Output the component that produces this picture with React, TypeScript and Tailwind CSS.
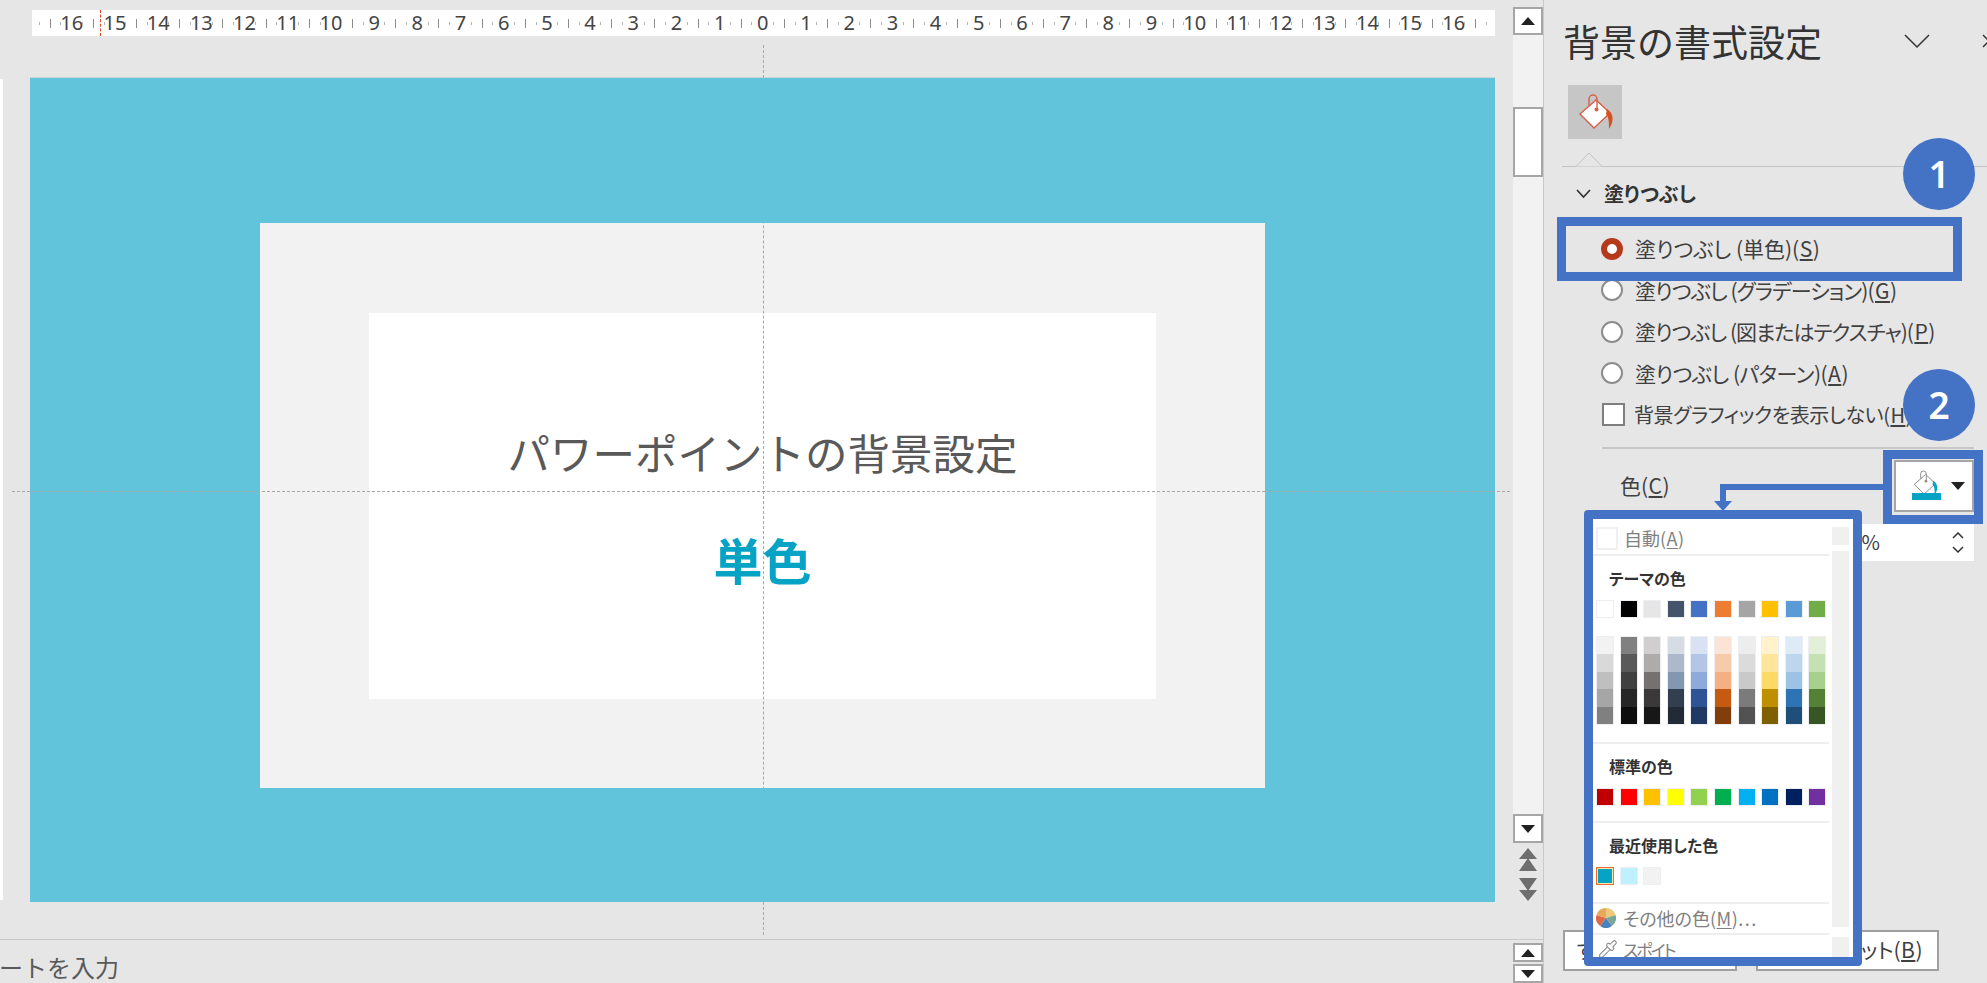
import { Pipette } from "lucide-react";

// ============================================================
// Data
// ============================================================

const rulerNumbers = [16, 15, 14, 13, 12, 11, 10, 9, 8, 7, 6, 5, 4, 3, 2, 1, 0, 1, 2, 3, 4, 5, 6, 7, 8, 9, 10, 11, 12, 13, 14, 15, 16];

const themeColors = [
  "bg-[#ffffff]", "bg-[#000000]", "bg-[#e7e6e6]", "bg-[#44546a]", "bg-[#4472c4]",
  "bg-[#ed7d31]", "bg-[#a5a5a5]", "bg-[#ffc000]", "bg-[#5b9bd5]", "bg-[#70ad47]",
];

const shadeColumns = [
  ["bg-[#f2f2f2]", "bg-[#d9d9d9]", "bg-[#bfbfbf]", "bg-[#a6a6a6]", "bg-[#808080]"],
  ["bg-[#808080]", "bg-[#595959]", "bg-[#404040]", "bg-[#262626]", "bg-[#0d0d0d]"],
  ["bg-[#d0cece]", "bg-[#aeabab]", "bg-[#757171]", "bg-[#3a3838]", "bg-[#181717]"],
  ["bg-[#d6dce4]", "bg-[#adb9ca]", "bg-[#8497b0]", "bg-[#333f4f]", "bg-[#222a35]"],
  ["bg-[#d9e2f3]", "bg-[#b4c6e7]", "bg-[#8eaadb]", "bg-[#2f5496]", "bg-[#1f3864]"],
  ["bg-[#fbe4d5]", "bg-[#f7caac]", "bg-[#f4b083]", "bg-[#c55a11]", "bg-[#833c0b]"],
  ["bg-[#ededed]", "bg-[#dbdbdb]", "bg-[#c9c9c9]", "bg-[#7b7b7b]", "bg-[#525252]"],
  ["bg-[#fff2cc]", "bg-[#ffe599]", "bg-[#ffd966]", "bg-[#bf8f00]", "bg-[#7f6000]"],
  ["bg-[#deeaf6]", "bg-[#bdd6ee]", "bg-[#9cc2e5]", "bg-[#2e74b5]", "bg-[#1f4e79]"],
  ["bg-[#e2efd9]", "bg-[#c5e0b3]", "bg-[#a8d08d]", "bg-[#538135]", "bg-[#375623]"],
];

const standardColors = [
  "bg-[#c00000]", "bg-[#ff0000]", "bg-[#ffc000]", "bg-[#ffff00]", "bg-[#92d050]",
  "bg-[#00b050]", "bg-[#00b0f0]", "bg-[#0070c0]", "bg-[#002060]", "bg-[#7030a0]",
];

const fillOptions = [
  { label: "塗りつぶし (単色)", key: "S", checked: true, tracking: "tracking-normal" },
  { label: "塗りつぶし (グラデーション)", key: "G", checked: false, tracking: "tracking-[-0.9px]" },
  { label: "塗りつぶし (図またはテクスチャ)", key: "P", checked: false, tracking: "tracking-[-1px]" },
  { label: "塗りつぶし (パターン)", key: "A", checked: false, tracking: "tracking-[-0.5px]" },
];

// ============================================================
// Small parts
// ============================================================

function Triangle({ up, className }: { up?: boolean; className?: string }) {
  return (
    <svg width="14" height="8" viewBox="0 0 14 8" className={className}>
      <path d={up ? "M7 0 14 8H0Z" : "M0 0H14L7 8Z"} fill="currentColor" />
    </svg>
  );
}

function ScrollButton({ up, className }: { up?: boolean; className: string }) {
  return (
    <div className={`flex w-[30px] items-center justify-center border-2 border-[#a6a6a6] bg-white text-[#222] ${className}`}>
      <Triangle up={up} />
    </div>
  );
}

function Hotkey({ k }: { k: string }) {
  return (
    <span className="tracking-[0.5px]">
      (<span className="underline underline-offset-2">{k}</span>)
    </span>
  );
}

function Swatch({ color }: { color: string }) {
  return <div className={`h-[18px] w-[18px] border-[1.5px] border-[#eceef1] ${color}`} />;
}

function SwatchRow({ colors }: { colors: string[] }) {
  return (
    <div className="flex gap-[5.6px] pl-[3px]">
      {colors.map((c, i) => (
        <Swatch key={i} color={c} />
      ))}
    </div>
  );
}

function MenuDivider() {
  return <div className="h-[2px] w-[236px] bg-[#eeeeee]" />;
}

function MenuHeading({ children }: { children: string }) {
  return (
    <div className="flex h-[44px] items-center pl-[16px] text-[16px] font-bold text-[#333] [font-feature-settings:'palt']">
      {children}
    </div>
  );
}

function Bucket({ stroke, drip }: { stroke: string; drip: string }) {
  return (
    <svg width="54" height="54" viewBox="0 0 54 54" fill="none">
      <path d="M12 29 28 15 42 28 26 43Z" fill="#fff" stroke={stroke} strokeWidth="1.4" />
      <path d="M21 21V14a4 4 0 0 1 8 0V24" stroke={stroke} strokeWidth="1.4" />
      <circle cx="28.5" cy="24.5" r="2" fill={stroke} />
      <path d="M39 24C45 28 47 35 41 44C41 37 41 33 38 29Z" fill={drip} />
    </svg>
  );
}

// ============================================================
// Ruler
// ============================================================

function Ruler() {
  const small = <span className="h-[3px] w-px bg-[#b5b5b5]" />;
  const tall = <span className="h-[9px] w-px bg-[#8c8c8c]" />;
  const cell = "flex h-full w-[10.8px] flex-none items-center justify-center";
  return (
    <div className="relative ml-[32px] mt-[10px] flex h-[26px] w-[1463px] bg-white pl-[2px] font-['Noto_Sans'] text-[20px] text-[#444]">
      <span className={cell}>{small}</span>
      <span className={cell}>{tall}</span>
      <span className={cell}>{small}</span>
      {rulerNumbers.map((n, i) => (
        <div key={i} className="flex">
          <span className={cell}>{n}</span>
          <span className={cell}>{small}</span>
          <span className={cell}>{tall}</span>
          <span className={cell}>{small}</span>
        </div>
      ))}
      <div className="absolute left-[68px] top-0 h-full border-l border-dashed border-[#e0452a]" />
    </div>
  );
}

// ============================================================
// Colour menu
// ============================================================

function ColorMenu() {
  return (
    <div className="absolute left-[1584px] top-[510px] flex h-[456px] w-[278px] overflow-hidden rounded-[4px] border-[9px] border-[#4472c4] bg-white">
      <div className="w-[239px] flex-none">
        <div className="flex h-[35px] items-start gap-[6px] pl-[3px] pt-[8px] text-[18px] text-[#808080]">
          <div className="h-[23px] w-[22px] border-2 border-[#f0f0f0]" />
          <span className="leading-[23px]">
            自動<Hotkey k="A" />
          </span>
        </div>
        <MenuDivider />
        <MenuHeading>テーマの色</MenuHeading>
        <SwatchRow colors={themeColors} />
        <div className="mt-[18px] flex gap-[5.6px] pl-[3px]">
          {shadeColumns.map((col, i) => (
            <div key={i} className="w-[18px] border-[1.5px] border-[#eceef1]">
              {col.map((c) => (
                <div key={c} className={`h-[17.4px] ${c}`} />
              ))}
            </div>
          ))}
        </div>
        <div className="mt-[17px]">
          <MenuDivider />
        </div>
        <MenuHeading>標準の色</MenuHeading>
        <SwatchRow colors={standardColors} />
        <div className="mt-[15px]">
          <MenuDivider />
        </div>
        <MenuHeading>最近使用した色</MenuHeading>
        <div className="flex gap-[5.6px] pl-[3px]">
          <div className="h-[18px] w-[18px] border-[1.5px] border-[#ed6c2c] bg-[#fde9b0] p-px">
            <div className="h-full w-full bg-[#06a3c4]" />
          </div>
          <Swatch color="bg-[#bff0ff]" />
          <Swatch color="bg-[#f2f2f2]" />
        </div>
        <div className="mt-[17px]">
          <MenuDivider />
        </div>
        <div className="flex h-[29px] items-center gap-[7px] pl-[3px] text-[18px] text-[#808080] [font-feature-settings:'palt']">
          <svg width="20" height="20" viewBox="0 0 20 20" className="flex-none">
            <path d="M10 10V0A10 10 0 0 1 19.51 6.91Z" fill="#f0c87c" />
            <path d="M10 10 19.51 6.91A10 10 0 0 1 15.88 18.09Z" fill="#7ba896" />
            <path d="M10 10 15.88 18.09A10 10 0 0 1 4.12 18.09Z" fill="#4a82bc" />
            <path d="M10 10 4.12 18.09A10 10 0 0 1 .49 6.91Z" fill="#dc6a45" />
            <path d="M10 10 .49 6.91A10 10 0 0 1 10 0Z" fill="#e8a85c" />
          </svg>
          <span>
            その他の色<Hotkey k="M" />
            <span className="tracking-[1.5px]">...</span>
          </span>
        </div>
        <MenuDivider />
        <div className="flex h-[30px] items-center gap-[5px] pl-[4px] text-[17px] tracking-[-2px] text-[#808080] [font-feature-settings:'palt']">
          <Pipette size={21} strokeWidth={1.2} className="flex-none text-[#8a8a8a]" />
          <span>スポイト</span>
        </div>
      </div>
      <div className="flex w-[17px] flex-none flex-col pt-[8px]">
        <div className="h-[18px] bg-[#f0f0f0]" />
        <div className="mt-[6px] h-[379px] bg-[#f0f0f0]" />
        <div className="mt-[10px] h-[20px] bg-[#f0f0f0]" />
      </div>
    </div>
  );
}

// ============================================================
// Format panel
// ============================================================

function FormatPanel() {
  return (
    <div className="h-full w-[443px] flex-none overflow-hidden text-[#404040]">
      <div className="mt-[18px] flex h-[46px] items-center pl-[19px]">
        <span className="flex-none whitespace-nowrap text-[37px] leading-none text-[#333]">背景の書式設定</span>
        <svg width="26" height="15" viewBox="0 0 26 15" fill="none" className="ml-[82px] flex-none">
          <path d="M1 1 13 13 25 1" stroke="#333" strokeWidth="1.5" />
        </svg>
        <svg width="14" height="14" viewBox="0 0 14 14" fill="none" className="ml-[52px] flex-none">
          <path d="M1 1 13 13M13 1 1 13" stroke="#333" strokeWidth="1.5" />
        </svg>
      </div>

      <div className="ml-[24px] mt-[21px] h-[54px] w-[54px] bg-[#c6c6c6]">
        <Bucket stroke="#d8604a" drip="#d8501f" />
      </div>

      <div className="relative ml-[18px] mt-[27px] h-px bg-[#c4c4c4]">
        <svg width="26" height="15" viewBox="0 0 26 15" className="absolute -top-[14px] left-[14px]">
          <path d="M0 14.5 13 1 26 14.5" fill="#e6e6e6" stroke="#c4c4c4" />
        </svg>
      </div>

      <div className="mt-[13px] flex h-[28px] items-center gap-[13px] pl-[32px] text-[20px] font-bold text-[#333] [font-feature-settings:'palt']">
        <svg width="15" height="10" viewBox="0 0 15 10" fill="none">
          <path d="M1 1 7.5 8 14 1" stroke="#333" strokeWidth="1.7" />
        </svg>
        <span>塗りつぶし</span>
      </div>

      <div className="mt-[20px] text-[21px] [font-feature-settings:'palt']">
        {fillOptions.map((o) => (
          <div key={o.key} className="flex h-[41.5px] items-center gap-[12px] pl-[57px]">
            {o.checked ? (
              <span className="h-[22px] w-[22px] flex-none rounded-full border-[6px] border-[#b5391a] bg-white" />
            ) : (
              <span className="h-[22px] w-[22px] flex-none rounded-full border-2 border-[#8c8c8c] bg-white" />
            )}
            <span className={`whitespace-nowrap ${o.tracking}`}>
              {o.label}
              <Hotkey k={o.key} />
            </span>
          </div>
        ))}
        <div className="flex h-[41.5px] items-center gap-[9px] pl-[58px]">
          <span className="h-[23px] w-[23px] flex-none border-2 border-[#7f7f7f] bg-white" />
          <span className="whitespace-nowrap text-[20px] tracking-[-0.4px]">
            背景グラフィックを表示しない
            <Hotkey k="H" />
          </span>
        </div>
      </div>

      <div className="ml-[58px] mr-[13px] mt-[11px] h-[2px] bg-[#c8c8c8]" />

      <div className="mt-[11px] flex h-[52px] items-center justify-between pl-[76px] pr-[13px] text-[21px]">
        <span>
          色<Hotkey k="C" />
        </span>
        <div className="flex h-[52px] w-[80px] items-center gap-[8px] border-2 border-[#a6a6a6] bg-white pl-[7px]">
          <div className="relative h-[36px] w-[40px] flex-none overflow-hidden">
            <div className="absolute left-[3px] -top-[4px] origin-top-left scale-[0.7]">
              <Bucket stroke="#8c8c8c" drip="#06a3c4" />
            </div>
            <div className="absolute bottom-[4px] left-[9px] h-[7px] w-[29px] bg-[#06a3c4]" />
          </div>
          <Triangle className="flex-none text-[#222]" />
        </div>
      </div>

      <div className="ml-auto mr-[13px] mt-[12px] flex h-[37px] w-[200px] items-center justify-end bg-white pr-[10px] text-[20px]">
        <span className="mr-[72px]">0%</span>
        <div className="flex flex-col gap-[7px]">
          <svg width="12" height="7" viewBox="0 0 12 7" fill="none">
            <path d="M1 6 6 1 11 6" stroke="#333" strokeWidth="1.5" />
          </svg>
          <svg width="12" height="7" viewBox="0 0 12 7" fill="none">
            <path d="M1 1 6 6 11 1" stroke="#333" strokeWidth="1.5" />
          </svg>
        </div>
      </div>

      <div className="mt-[369px] flex gap-[19px] pl-[19px] text-[21px] [font-feature-settings:'palt']">
        <div className="flex h-[41px] w-[174px] items-center justify-center whitespace-nowrap border-2 border-[#a0a0a0] bg-white">
          すべてに適用<Hotkey k="L" />
        </div>
        <div className="flex h-[41px] w-[183px] items-center justify-end whitespace-nowrap border-2 border-[#a0a0a0] bg-white pr-[14px]">
          背景のリセット
          <Hotkey k="B" />
        </div>
      </div>
    </div>
  );
}

// ============================================================
// App
// ============================================================

export default function App() {
  return (
    <div className="relative flex h-[983px] w-[1987px] overflow-hidden bg-[#e6e6e6] font-['Noto_Sans_CJK_JP','Noto_Sans',sans-serif]">
      {/* スライド + ノート */}
      <div className="flex h-full w-[1544px] flex-none flex-col border-r border-[#c8c8c8]">
        <div className="flex h-[939px] flex-none">
          <div className="w-[1513px] flex-none">
            <Ruler />
            <div className="mt-[41px] flex h-[825px]">
              <div className="my-[2px] w-[3px] bg-white" />
              <div className="ml-[27px] flex w-[1465px] items-start justify-center border-t border-[#c9d6da] bg-[#62c4da]">
                <div className="mt-[145px] flex h-[565px] w-[1005px] items-start justify-center bg-[#f2f2f2]">
                  <div className="mt-[90px] flex h-[386px] w-[787px] flex-col items-center bg-white">
                    <div className="mt-[110px] text-[42.5px] leading-[58px] text-[#595959]">
                      パワーポイントの背景設定
                    </div>
                    <div className="mt-[46px] text-[49px] font-semibold leading-[64px] text-[#06a3c4]">
                      単色
                    </div>
                  </div>
                </div>
              </div>
            </div>
          </div>
          <div className="flex w-[30px] flex-none flex-col pt-[7px]">
            <ScrollButton up className="h-[28px]" />
            <div className="flex h-[779px] flex-none flex-col bg-[#f2f2f2] pt-[72px]">
              <div className="h-[70px] w-[30px] border-2 border-[#a6a6a6] bg-white" />
            </div>
            <ScrollButton className="h-[29px]" />
            <div className="mt-[5px] flex flex-col items-center gap-[7px] text-[#6e6e6e]">
              <svg width="18" height="23" viewBox="0 0 18 23">
                <path d="M9 0 18 11H0ZM9 10 18 23H0Z" fill="currentColor" />
              </svg>
              <svg width="18" height="23" viewBox="0 0 18 23">
                <path d="M0 0H18L9 13ZM0 12H18L9 23Z" fill="currentColor" />
              </svg>
            </div>
          </div>
        </div>
        <div className="flex flex-1 justify-between overflow-hidden border-t border-[#c8c8c8]">
          <span className="-ml-[25px] mt-[9px] text-[24px] leading-[36px] text-[#595959]">ノートを入力</span>
          <div className="flex w-[30px] flex-none flex-col gap-[2px] pt-[3px]">
            <ScrollButton up className="h-[25px]" />
            <ScrollButton className="h-[25px]" />
          </div>
        </div>
      </div>

      <FormatPanel />

      {/* ガイド線 */}
      <div className="absolute left-[763px] top-[45px] h-[890px] border-l border-dashed border-[#a8a8a8]" />
      <div className="absolute left-[12px] top-[491px] w-[1498px] border-t border-dashed border-[#a8a8a8]" />

      {/* 注釈 */}
      <div className="absolute left-[1557px] top-[217px] h-[64px] w-[405px] border-[9px] border-[#4472c4]" />
      <div className="absolute left-[1883px] top-[450px] h-[74px] w-[100px] border-[9px] border-[#4472c4]" />
      <div className="absolute left-[1903px] top-[369px] flex h-[72px] w-[72px] items-center justify-center rounded-full bg-[#4472c4] font-['Noto_Sans'] text-[37px] font-semibold text-white">
        2
      </div>
      <div className="absolute left-[1903px] top-[138px] flex h-[72px] w-[72px] items-center justify-center rounded-full bg-[#4472c4] font-['Noto_Sans'] text-[37px] font-semibold text-white">
        1
      </div>
      <div className="absolute left-[1720px] top-[484px] h-[6px] w-[164px] bg-[#4472c4]" />
      <div className="absolute left-[1720px] top-[484px] h-[18px] w-[6px] bg-[#4472c4]" />
      <svg width="18" height="10" viewBox="0 0 18 10" className="absolute left-[1714px] top-[501px]">
        <path d="M0 0H18L9 10Z" fill="#4472c4" />
      </svg>

      <ColorMenu />
    </div>
  );
}
